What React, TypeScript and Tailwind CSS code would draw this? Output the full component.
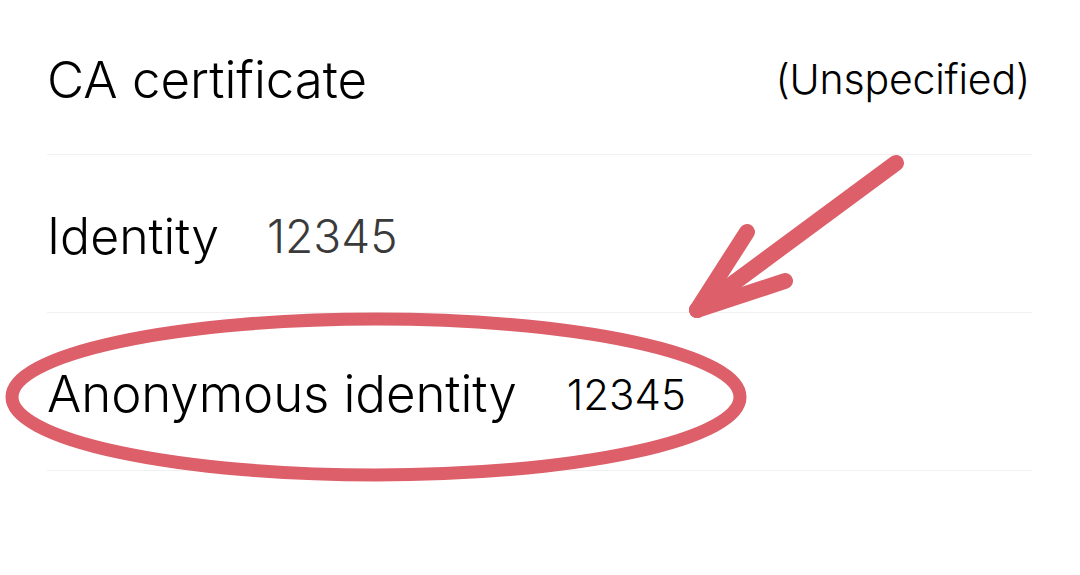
import React from 'react';

const font = { fontFamily: 'Inter, "Noto Sans", sans-serif' };

export default function App() {
  return (
    <div className="relative w-[1080px] h-[575px] bg-white overflow-hidden" style={font}>
      <div className="flex flex-col pl-[47px] pr-[48px]">
        {/* CA certificate row */}
        <div className="flex items-center justify-between h-[155px] border-b border-[#f1f1f1]">
          <span className="text-[51px] font-[350] text-black tracking-[0px] pt-[6px]">CA certificate</span>
          <span className="text-[41px] font-[350] text-black tracking-[-0.2px] mr-[2px] mt-[6px]">(Unspecified)</span>
        </div>
        {/* Identity row */}
        <div className="flex items-center h-[158px] border-b border-[#f1f1f1]">
          <span className="text-[50px] font-[350] text-black tracking-[0px] pt-[6px]">Identity</span>
          <span className="text-[46px] font-[350] text-[#3a3a3a] ml-[48px] pt-[6px]">12345</span>
        </div>
        {/* Anonymous identity row */}
        <div className="flex items-center h-[158px] border-b border-[#f1f1f1]">
          <span className="text-[51px] font-[350] text-black tracking-[-0.1px] pt-[5px]">Anonymous identity</span>
          <span className="text-[42px] font-[350] text-black ml-[50px] pt-[5px]">12345</span>
        </div>
      </div>

      {/* hand-drawn annotation */}
      <svg className="absolute inset-0 pointer-events-none" width="1080" height="575" viewBox="0 0 1080 575">
        <g fill="none" stroke="#dc5f6a" strokeLinecap="round" strokeLinejoin="round">
          <ellipse cx="376" cy="397" rx="364" ry="78" strokeWidth="13" />
          <path d="M896 163 L697 310" strokeWidth="16" />
          <path d="M747 232 L697 310 L785 281" strokeWidth="16" />
        </g>
      </svg>
    </div>
  );
}
